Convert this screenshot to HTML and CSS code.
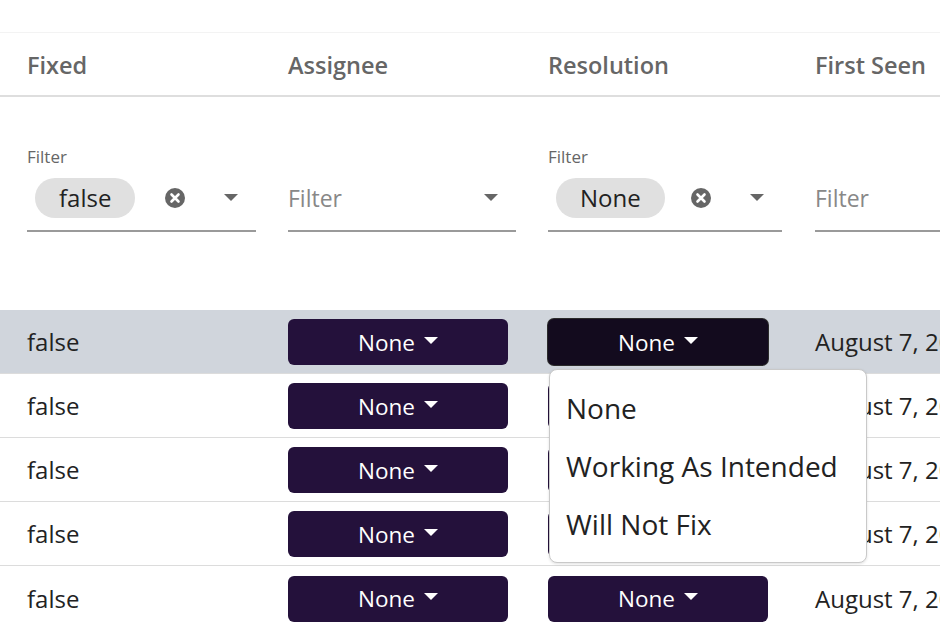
FILE: index.html
```html
<!DOCTYPE html>
<html>
<head>
<meta charset="utf-8">
<link rel="stylesheet" href="styles.css">
</head>
<body>
<div class="page">
  <div class="table">
    <div class="row head">
      <div class="cell">Fixed</div>
      <div class="cell">Assignee</div>
      <div class="cell">Resolution</div>
      <div class="cell">First Seen</div>
    </div>
    <div class="row filters">
      <div class="cell">
        <div class="label">Filter</div>
        <div class="field">
          <span class="chip">false</span>
          <span class="spacer"></span>
          <svg class="clear" width="20" height="20" viewBox="0 0 20 20"><circle cx="10" cy="10" r="10" fill="#666"/><path d="M6.5 6.5 L13.5 13.5 M13.5 6.5 L6.5 13.5" stroke="#fff" stroke-width="2.6" stroke-linecap="round"/></svg>
          <span class="arrow"></span>
        </div>
      </div>
      <div class="cell">
        <div class="label hidden">Filter</div>
        <div class="field">
          <span class="placeholder">Filter</span>
          <span class="spacer"></span>
          <span class="arrow"></span>
        </div>
      </div>
      <div class="cell">
        <div class="label">Filter</div>
        <div class="field">
          <span class="chip">None</span>
          <span class="spacer"></span>
          <svg class="clear" width="20" height="20" viewBox="0 0 20 20"><circle cx="10" cy="10" r="10" fill="#666"/><path d="M6.5 6.5 L13.5 13.5 M13.5 6.5 L6.5 13.5" stroke="#fff" stroke-width="2.6" stroke-linecap="round"/></svg>
          <span class="arrow"></span>
        </div>
      </div>
      <div class="cell">
        <div class="label hidden">Filter</div>
        <div class="field open-end">
          <span class="placeholder">Filter</span>
        </div>
      </div>
    </div>

    <div class="row data selected">
      <div class="cell">false</div>
      <div class="cell"><button class="btn">None<span class="caret"></span></button></div>
      <div class="cell menu-host">
        <button class="btn focused">None<span class="caret"></span></button>
        <div class="menu">
          <div class="item">None</div>
          <div class="item">Working As Intended</div>
          <div class="item">Will Not Fix</div>
        </div>
      </div>
      <div class="cell">August 7, 2019</div>
    </div>
    <div class="row data">
      <div class="cell">false</div>
      <div class="cell"><button class="btn">None<span class="caret"></span></button></div>
      <div class="cell"><button class="btn">None<span class="caret"></span></button></div>
      <div class="cell">August 7, 2019</div>
    </div>
    <div class="row data">
      <div class="cell">false</div>
      <div class="cell"><button class="btn">None<span class="caret"></span></button></div>
      <div class="cell"><button class="btn">None<span class="caret"></span></button></div>
      <div class="cell">August 7, 2019</div>
    </div>
    <div class="row data">
      <div class="cell">false</div>
      <div class="cell"><button class="btn">None<span class="caret"></span></button></div>
      <div class="cell"><button class="btn">None<span class="caret"></span></button></div>
      <div class="cell">August 7, 2019</div>
    </div>
    <div class="row data last">
      <div class="cell">false</div>
      <div class="cell"><button class="btn">None<span class="caret"></span></button></div>
      <div class="cell"><button class="btn">None<span class="caret"></span></button></div>
      <div class="cell">August 7, 2019</div>
    </div>
  </div>
</div>
</body>
</html>
```
FILE: styles.css
```css
html, body {
  margin: 0;
  padding: 0;
  background: #fff;
  overflow: hidden;
}
body {
  width: 940px;
  height: 640px;
  font-family: "Open Sans", "Lato", sans-serif;
  color: #222;
}
.page {
  padding-top: 32px;
}
.table {
  width: 1100px;
  border-top: 1px solid #f3f3f3;
}
.row {
  display: grid;
  grid-template-columns: 261px 260px 267px 312px;
  padding-left: 27px;
  align-items: center;
}
.head {
  height: 64px;
  border-bottom: 2px solid #dedede;
  font-size: 23.5px;
  font-weight: 600;
  color: #666;
  padding-top: 1px;
  box-sizing: border-box;
}
.filters {
  height: 213px;
  align-items: start;
  padding-top: 50px;
  box-sizing: border-box;
}
.label {
  font-size: 17px;
  color: #666;
  height: 20px;
  line-height: 20px;
  margin-bottom: 5px;
}
.label.hidden {
  visibility: hidden;
}
.field {
  display: flex;
  align-items: center;
  height: 60px;
  border-bottom: 2px solid #9a9a9a;
  box-sizing: border-box;
  width: 229px;
  padding-bottom: 7px;
}
.filters .cell:nth-child(2) .field { width: 228px; }
.filters .cell:nth-child(3) .field { width: 234px; }
.field.open-end { width: 200px; }
.chip {
  display: inline-flex;
  align-items: center;
  justify-content: center;
  height: 40px;
  padding: 0 24px;
  margin-left: 8px;
  border-radius: 20px;
  background: #e0e0e0;
  font-size: 24px;
  color: #222;
}
.placeholder {
  font-size: 23px;
  color: #888;
  line-height: 40px;
}
.spacer { flex: 1; }
.clear {
  display: block;
  margin-right: 39px;
}
.arrow {
  width: 0;
  height: 0;
  border-left: 7px solid transparent;
  border-right: 7px solid transparent;
  border-top: 7px solid #666;
  margin-right: 18px;
}
.data {
  height: 64px;
  border-bottom: 1px solid #dcdcdc;
  font-size: 24px;
  color: #222;
  box-sizing: border-box;
}
.data.last { border-bottom: none; }
.data.selected {
  background: #d0d5dc;
}
.cell {
  white-space: nowrap;
}
.btn {
  display: flex;
  align-items: center;
  justify-content: center;
  width: 220px;
  height: 46px;
  border: none;
  border-radius: 6px;
  background: #24113b;
  color: #fff;
  font-family: inherit;
  font-size: 22.5px;
  padding: 0;
  margin-top: 1px;
}
.btn.focused {
  background: #130b1e;
  box-shadow: 0 0 0 1px #2b2b2b;
}
.caret {
  width: 0;
  height: 0;
  border-left: 7px solid transparent;
  border-right: 7px solid transparent;
  border-top: 7px solid #fff;
  margin-left: 9px;
  margin-top: -4px;
}
.menu-host {
  position: relative;
}
.menu {
  position: absolute;
  left: 1px;
  top: 51px;
  width: 316px;
  padding: 9px 0;
  background: #fff;
  border: 1px solid #c9c9c9;
  border-radius: 8px;
  box-shadow: 0 1px 3px rgba(0,0,0,0.12);
  z-index: 5;
}
.item {
  height: 58px;
  line-height: 58px;
  padding-left: 16px;
  font-size: 28px;
  color: #222;
}
```
